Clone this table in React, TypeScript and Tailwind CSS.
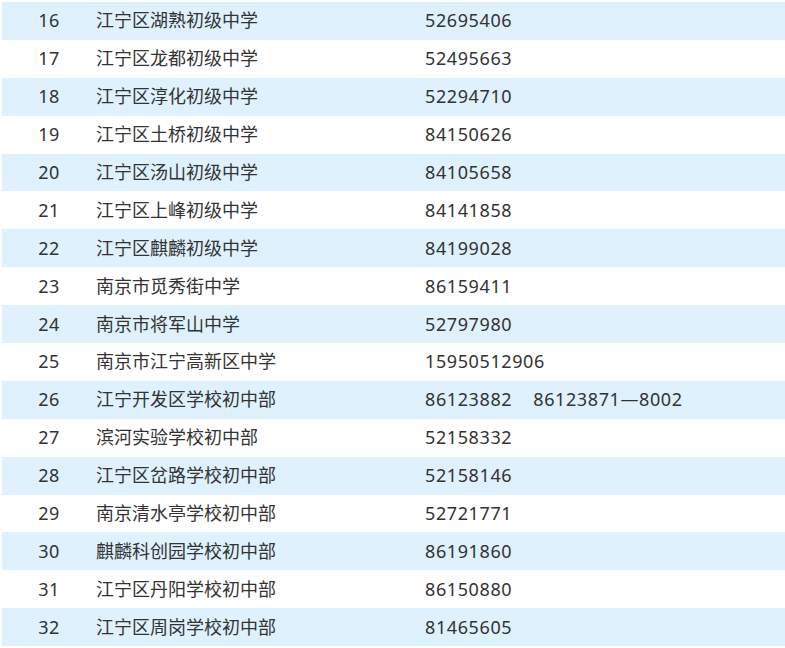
const rows: [number, string, string][] = [
  [16, "江宁区湖熟初级中学", "52695406"],
  [17, "江宁区龙都初级中学", "52495663"],
  [18, "江宁区淳化初级中学", "52294710"],
  [19, "江宁区土桥初级中学", "84150626"],
  [20, "江宁区汤山初级中学", "84105658"],
  [21, "江宁区上峰初级中学", "84141858"],
  [22, "江宁区麒麟初级中学", "84199028"],
  [23, "南京市觅秀街中学", "86159411"],
  [24, "南京市将军山中学", "52797980"],
  [25, "南京市江宁高新区中学", "15950512906"],
  [26, "江宁开发区学校初中部", "86123882\u00a0\u00a0\u00a0\u00a086123871—8002"],
  [27, "滨河实验学校初中部", "52158332"],
  [28, "江宁区岔路学校初中部", "52158146"],
  [29, "南京清水亭学校初中部", "52721771"],
  [30, "麒麟科创园学校初中部", "86191860"],
  [31, "江宁区丹阳学校初中部", "86150880"],
  [32, "江宁区周岗学校初中部", "81465605"],
];

export default function App() {
  return (
    <div
      className="w-[785px] h-[648px] overflow-hidden bg-white pt-[2px] pl-[2px] text-[18px] text-[#333]"
      style={{ fontFamily: '"Noto Sans", "Noto Sans CJK SC", sans-serif' }}
    >
      {rows.map(([n, name, phone], i) => (
        <div
          key={n}
          className={`flex items-center h-[37.9px] ${i % 2 === 0 ? "bg-[#def1fc]" : "bg-white"}`}
        >
          <div className="w-[94px] text-center tracking-[0.5px]">{n}</div>
          <div className="w-[329px] whitespace-nowrap">{name}</div>
          <div className="whitespace-nowrap tracking-[0.6px]">{phone}</div>
        </div>
      ))}
    </div>
  );
}
